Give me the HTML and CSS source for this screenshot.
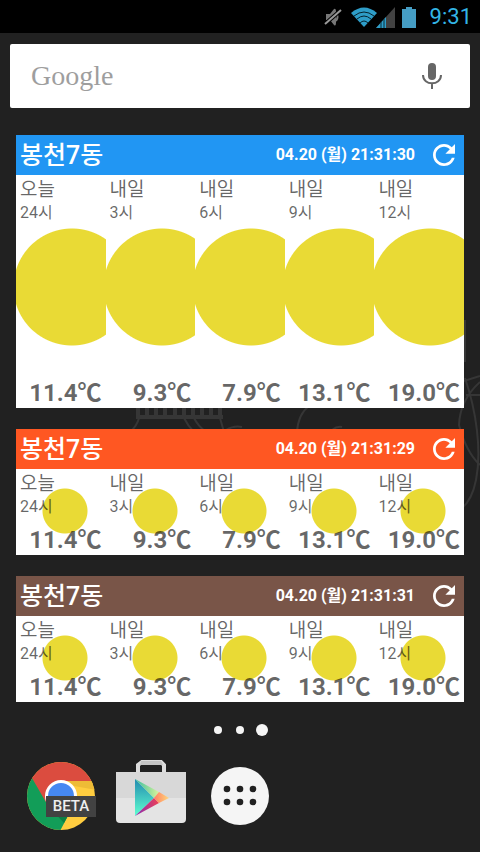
FILE: index.html
```html
<!DOCTYPE html>
<html lang="ko">
<head>
<meta charset="utf-8">
<meta name="viewport" content="width=device-width, initial-scale=1">
<title>Home</title>
<link rel="stylesheet" href="styles.css">
</head>
<body>
<svg class="wallpaper" viewBox="0 0 480 852" preserveAspectRatio="xMidYMid slice" aria-hidden="true">
  <g fill="none" stroke="#363636" stroke-width="2">
    <path d="M136 417H223M138 406V416M147 406V416M156 406V416M165 406V416M175 406V416M184 406V416M193 406V416M202 406V416M211 406V416M220 406V416" stroke-width="4"/>
    <path d="M139 418Q137 426 130 432M220 418L224 432M184 418Q188 426 194 432M194 418Q198 426 206 432M226 430Q234 425 242 427"/>
    <path d="M297 432Q298 414 310 405M332 430Q337 426 342 427"/>
    <path d="M465 320V362M464 381L480 376M466 395H480M465 378C476 410 482 450 476 480Q472 500 462 508M480 382Q460 400 459 425Q466 452 480 465"/>
  </g>
</svg>
<header class="status">
  <svg class="mute" width="18" height="20" viewBox="0 0 18 20" aria-label="Muted"><path d="M2 7H6L10 2Q12 1 12 5V15Q12 20 10 18L6 13H2Z" fill="#777"/><path d="M12 6Q15 10 12 14" fill="none" stroke="#777" stroke-width="2"/><path d="M1 17L17 3" stroke="#000" stroke-width="4"/><path d="M1 17L17 3" stroke="#999" stroke-width="2"/></svg>
  <svg class="wifi" width="28" height="20" viewBox="0 0 28 20" aria-label="Wi-Fi"><path d="M1 6Q14 -5 27 6L14 20Z" fill="#2e9dc8"/><path d="M4 9Q14 1 24 9M7 12Q14 6 21 12M10 16Q14 12 18 16" fill="none" stroke="#05232e" stroke-width="1"/></svg>
  <svg class="signal" width="20" height="22" viewBox="0 0 20 22" aria-label="Signal"><path d="M0 22L19 1V22Z" fill="#424242"/><path d="M0 22L10 11V22Z" fill="#2e9dc8"/><path d="M5 16V22M8 13V22" stroke="#082c39" stroke-width="1"/></svg>
  <svg class="battery" width="14" height="22" viewBox="0 0 14 22" aria-label="Battery"><path d="M0 3H4V1H10V3H14V22H0Z" fill="#459dc4"/></svg>
  <time>9:31</time>
</header>
<main>
  <form class="search" role="search">
    <input type="text" placeholder="Google" aria-label="Google">
    <button type="button" aria-label="Voice search"><svg width="20" height="28" viewBox="0 0 20 28"><rect x="6" y="1" width="8" height="17" rx="4" fill="#666"/><path d="M1 13C1 24 19 24 19 13M10 21V27" fill="none" stroke="#666" stroke-width="2"/></svg></button>
  </form>

  <section class="card large">
    <header class="bar blue"><h2>봉천7동</h2><time>04.20 (월) 21:31:30</time><button type="button" aria-label="Refresh"><svg width="22" height="22" viewBox="4 4 16 16"><path d="M17.650 6.350C16.200 4.900 14.210 4 12 4c-4.420 0-7.990 3.580-7.990 8s3.570 8 7.990 8c3.730 0 6.840-2.550 7.730-6h-2.080c-.82 2.330-3.040 4-5.650 4-3.310 0-6-2.690-6-6s2.690-6 6-6c1.660 0 3.140.69 4.220 1.780L13 11h7V4l-2.350 2.350z" fill="#fff"/></svg></button></header>
    <ul class="hours">
      <li><span class="day">오늘</span><span class="hour">24시</span><strong>11.4℃</strong></li>
      <li><span class="day">내일</span><span class="hour">3시</span><strong>9.3℃</strong></li>
      <li><span class="day">내일</span><span class="hour">6시</span><strong>7.9℃</strong></li>
      <li><span class="day">내일</span><span class="hour">9시</span><strong>13.1℃</strong></li>
      <li><span class="day">내일</span><span class="hour">12시</span><strong>19.0℃</strong></li>
    </ul>
  </section>

  <section class="card">
    <header class="bar orange"><h2>봉천7동</h2><time>04.20 (월) 21:31:29</time><button type="button" aria-label="Refresh"><svg width="22" height="22" viewBox="4 4 16 16"><path d="M17.650 6.350C16.200 4.900 14.210 4 12 4c-4.420 0-7.990 3.580-7.990 8s3.570 8 7.990 8c3.730 0 6.840-2.550 7.730-6h-2.080c-.82 2.330-3.040 4-5.650 4-3.310 0-6-2.690-6-6s2.690-6 6-6c1.660 0 3.140.69 4.220 1.780L13 11h7V4l-2.350 2.350z" fill="#fff"/></svg></button></header>
    <ul class="hours">
      <li><span class="day">오늘</span><span class="hour">24시</span><strong>11.4℃</strong></li>
      <li><span class="day">내일</span><span class="hour">3시</span><strong>9.3℃</strong></li>
      <li><span class="day">내일</span><span class="hour">6시</span><strong>7.9℃</strong></li>
      <li><span class="day">내일</span><span class="hour">9시</span><strong>13.1℃</strong></li>
      <li><span class="day">내일</span><span class="hour">12시</span><strong>19.0℃</strong></li>
    </ul>
  </section>

  <section class="card">
    <header class="bar brown"><h2>봉천7동</h2><time>04.20 (월) 21:31:31</time><button type="button" aria-label="Refresh"><svg width="22" height="22" viewBox="4 4 16 16"><path d="M17.650 6.350C16.200 4.900 14.210 4 12 4c-4.420 0-7.990 3.580-7.990 8s3.570 8 7.990 8c3.730 0 6.840-2.550 7.730-6h-2.080c-.82 2.330-3.040 4-5.650 4-3.310 0-6-2.690-6-6s2.690-6 6-6c1.660 0 3.140.69 4.220 1.780L13 11h7V4l-2.350 2.350z" fill="#fff"/></svg></button></header>
    <ul class="hours">
      <li><span class="day">오늘</span><span class="hour">24시</span><strong>11.4℃</strong></li>
      <li><span class="day">내일</span><span class="hour">3시</span><strong>9.3℃</strong></li>
      <li><span class="day">내일</span><span class="hour">6시</span><strong>7.9℃</strong></li>
      <li><span class="day">내일</span><span class="hour">9시</span><strong>13.1℃</strong></li>
      <li><span class="day">내일</span><span class="hour">12시</span><strong>19.0℃</strong></li>
    </ul>
  </section>

  <div class="pages"><i></i><i></i><i class="current"></i></div>
</main>
<nav class="dock">
  <a class="chrome" href="#chrome" aria-label="Chrome Beta">
    <svg width="70" height="70" viewBox="0 0 70 70">
      <defs><clipPath id="disc"><circle cx="35" cy="35" r="34"/></clipPath></defs>
      <g clip-path="url(#disc)">
        <rect width="70" height="70" fill="#ffcd40"/>
        <path d="M0 0H70V20H35L20 43L6 18Z" fill="#db4c3f"/>
        <path d="M6 17L21 43L35 51H44L34 70H0V17Z" fill="#129d58"/>
        <path d="M23 46L44 51L38 62Z" fill="#0b8045"/>
        <path d="M42 20H70V29L48 25Z" fill="#eebb36"/>
      </g>
      <circle cx="35" cy="35" r="16" fill="#fff"/><circle cx="35" cy="35" r="13" fill="#4688f1"/>
    </svg>
    <span class="beta">BETA</span>
  </a>
  <a href="#store" aria-label="Play Store">
    <svg width="70" height="72" viewBox="0 0 70 72">
      <path d="M22 13V5L26 2H45L48 5V13" fill="none" stroke="#ddd" stroke-width="4"/><path d="M25 1H45L47 5H24Z" fill="#c4c4c4"/>
      <path d="M0 12H70V38H0Z" fill="#d8d8d8"/><path d="M0 38H70V59Q70 63 66 63H4Q0 63 0 59Z" fill="#e4e4e4"/>
      <defs><linearGradient id="teal" x1="0" y1="0" x2="0" y2="1"><stop stop-color="#238bb0"/><stop offset="1" stop-color="#5fffd0"/></linearGradient><linearGradient id="lime"><stop stop-color="#36bda0"/><stop offset="1" stop-color="#d9f49a"/></linearGradient><linearGradient id="rose"><stop stop-color="#872db5"/><stop offset="1" stop-color="#ee4055"/></linearGradient><linearGradient id="peach"><stop stop-color="#ff7d62"/><stop offset="1" stop-color="#ffd77c"/></linearGradient></defs>
      <path d="M19 19V56L38 38Z" fill="url(#teal)"/><path d="M19 19L43 32L38 38Z" fill="url(#lime)"/><path d="M19 56L38 38L43 43Z" fill="url(#rose)"/><path d="M43 32L53 38L43 43L38 38Z" fill="url(#peach)"/>
    </svg>
  </a>
  <button class="apps" type="button" aria-label="Apps"><svg width="60" height="60" viewBox="0 0 60 60"><circle cx="30" cy="30" r="29" fill="#f5f5f5"/><g fill="#212121"><circle cx="17" cy="23" r="3.300"/><circle cx="30" cy="23" r="3.300"/><circle cx="43" cy="23" r="3.300"/><circle cx="17" cy="36" r="3.300"/><circle cx="30" cy="36" r="3.300"/><circle cx="43" cy="36" r="3.300"/></g></svg></button>
</nav>
</body>
</html>
```
FILE: styles.css
```css
* { box-sizing: border-box; }
body {
  margin: 0;
  min-height: 100vh;
  background: #212121;
  color: #666;
  font-family: Roboto, "Noto Sans CJK KR", sans-serif;
}
svg { display: block; }
button { display: block; padding: 0; border: 0; background: none; }
.wallpaper { position: absolute; inset: 0; width: 100%; height: 100%; z-index: -1; }
.status {
  display: flex;
  align-items: center;
  justify-content: flex-end;
  height: 33px;
  padding: 0 8px 0 0;
  background: #000;
  color: #33b5e5;
  font-size: 22px;
  line-height: 33px;
}
.wifi { margin: 0 -2px 0 8px; }
.battery { margin: 0 14px 0 6px; }
main { padding: 11px 16px 0; }
.search {
  display: flex;
  align-items: center;
  height: 64px;
  margin: 0 -6px 27px;
  padding: 0 28px 0 21px;
  border-radius: 2px;
  background: #fff;
}
.search input {
  flex: 1;
  min-width: 0;
  padding: 0;
  border: 0;
  outline: 0;
  background: none;
  font: 28px/40px "Liberation Serif", serif;
}
.search input::placeholder { color: #9e9e9e; opacity: 1; }
.card { margin-bottom: 21px; background: #fff; }
.bar { display: flex; align-items: center; height: 40px; padding: 0 9px 0 4px; color: #fff; }
.bar h2 { flex: 1; margin: 0; padding-top: 2px; font-size: 25px; font-weight: 500; line-height: 38px; }
.bar time { margin-right: 18px; font-size: 16px; font-weight: 700; line-height: 40px; }
.blue { background: #2196f3; }
.orange { background: #ff5722; }
.brown { background: #795548; }
.hours {
  display: grid;
  grid-template-columns: repeat(5, 1fr);
  height: 86px;
  margin: 0;
  padding: 0;
  list-style: none;
}
.hours li {
  display: flex;
  flex-direction: column;
  min-width: 0;
  padding: 2px 4px 0;
  overflow: hidden;
  color: rgba(0, 0, 0, 0.6);
  background: radial-gradient(circle at 49px 42px, #e9da35 22px, transparent 23px);
}
.large .hours { height: 233px; }
.large li { background: radial-gradient(circle at 56px 112px, #e9da35 58px, transparent 59px); }
.day { font-size: 19px; line-height: 26px; }
.hour { font-size: 16px; line-height: 20px; }
.hours strong { margin-top: auto; text-align: right; font-size: 24px; line-height: 30px; }
.pages { display: flex; align-items: center; justify-content: center; gap: 10px; height: 14px; }
.pages i { width: 8px; height: 8px; margin: 0 2px; border-radius: 50%; background: #f5f5f5; }
.pages .current { width: 12px; height: 12px; margin: 0; }
.dock { display: flex; align-items: center; gap: 20px; padding: 23px 26px 0; }
.chrome { position: relative; color: #eee; text-decoration: none; }
.apps { margin-left: 4px; }
.beta {
  position: absolute;
  right: 0;
  bottom: 14px;
  width: 50px;
  background: #424242;
  font-size: 15px;
  font-weight: 500;
  line-height: 21px;
  text-align: center;
}
```
